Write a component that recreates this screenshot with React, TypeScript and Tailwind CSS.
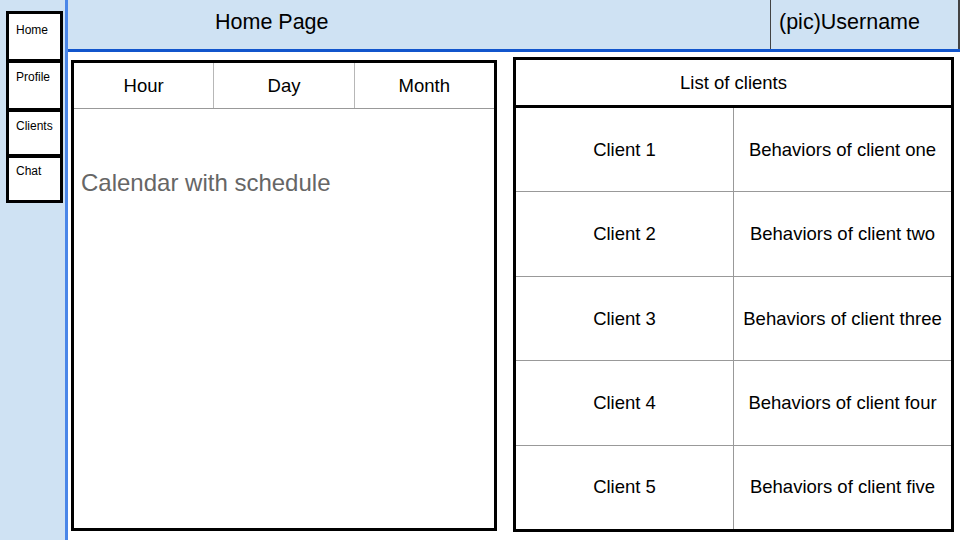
import React from 'react';

const navItems = [
  { label: 'Home', h: 'h-[51px]', pt: 'pt-[9px]' },
  { label: 'Profile', h: 'h-[51px]', pt: 'pt-[7px]' },
  { label: 'Clients', h: 'h-[48px]', pt: 'pt-[7px]' },
  { label: 'Chat', h: 'h-[48px]', pt: 'pt-[6px]' },
];

const clients = [
  { name: 'Client 1', behavior: 'Behaviors of client one' },
  { name: 'Client 2', behavior: 'Behaviors of client two' },
  { name: 'Client 3', behavior: 'Behaviors of client three' },
  { name: 'Client 4', behavior: 'Behaviors of client four' },
  { name: 'Client 5', behavior: 'Behaviors of client five' },
];

const App: React.FC = () => {
  return (
    <div className="flex w-[960px] h-[540px] overflow-hidden bg-white text-black font-['Liberation_Sans',Arial,sans-serif]">
      {/* Sidebar */}
      <div className="w-[68px] h-full bg-[#cfe2f3] border-r-[3px] border-[#4a86e8] pt-[11px] pl-[6px]">
        <div className="flex flex-col w-[57px]">
          {navItems.map((item, i) => (
            <div
              key={item.label}
              className={`${item.h} ${i > 0 ? '-mt-[2px]' : ''} border-[3px] border-black bg-white pl-[7px] ${item.pt} text-[12px] leading-[14px]`}
            >
              {item.label}
            </div>
          ))}
        </div>
      </div>

      {/* Main */}
      <div className="flex flex-col flex-1 h-full">
        {/* Header */}
        <div className="flex h-[52px] bg-[#cfe2f3] border-b-[3px] border-[#1155cc]">
          <div className="flex-1 flex items-center pl-[147px] pb-[5px] text-[21.5px]">Home Page</div>
          <div className="w-[190px] flex items-center pl-[8px] pb-[5px] border-l border-r-2 border-[#434343] text-[21.5px]">
            (pic)Username
          </div>
        </div>

        {/* Content */}
        <div className="flex items-start pl-[3px] gap-[16px]">
          {/* Calendar */}
          <div className="mt-[8px] w-[426px] h-[471px] border-[3px] border-black flex flex-col">
            <div className="flex h-[46px] border-b border-[#999999]">
              {['Hour', 'Day', 'Month'].map((c, i) => (
                <div
                  key={c}
                  className={`flex-1 flex items-center justify-center text-[18.5px] ${i < 2 ? 'border-r border-[#b7b7b7]' : ''}`}
                >
                  {c}
                </div>
              ))}
            </div>
            <div className="pl-[7px] pt-[60px] text-[24px] leading-[28px] text-[#666666]">Calendar with schedule</div>
          </div>

          {/* Clients list */}
          <div className="mt-[5px] w-[441px] h-[475px] border-[3px] border-black flex flex-col">
            <div className="h-[48px] shrink-0 border-b-[3px] border-black flex items-center justify-center text-[18.5px]">
              List of clients
            </div>
            {clients.map((c, i) => (
              <div
                key={c.name}
                className={`flex flex-1 ${i < clients.length - 1 ? 'border-b border-[#999999]' : ''}`}
              >
                <div className="w-[218px] border-r border-[#999999] flex items-center justify-center text-[18.5px]">
                  {c.name}
                </div>
                <div className="flex-1 flex items-center justify-center text-[18.5px]">{c.behavior}</div>
              </div>
            ))}
          </div>
        </div>
      </div>
    </div>
  );
};

export default App;
